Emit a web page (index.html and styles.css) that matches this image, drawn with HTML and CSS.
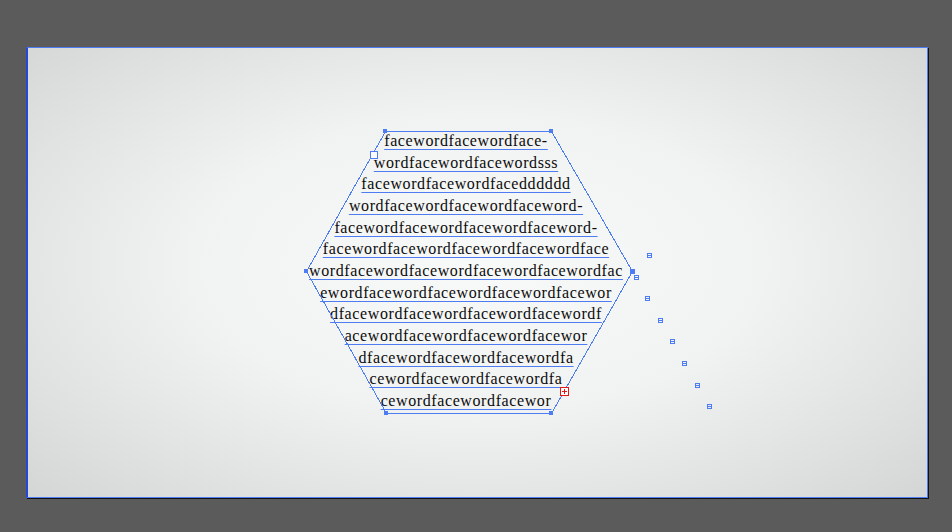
FILE: index.html
```html
<!DOCTYPE html>
<html lang="en">
<head>
    <meta charset="UTF-8">
    <title>Artboard - Text in Shape</title>
    <link rel="stylesheet" href="styles.css">
</head>
<body>
    <div class="artboard"></div>

    <!-- text flowed inside the hexagon -->
    <div class="text-frame">
        <span>facewordfacewordface-</span>
        <span>wordfacewordfacewordsss</span>
        <span>facewordfacewordfacedddddd</span>
        <span>wordfacewordfacewordfaceword-</span>
        <span>facewordfacewordfacewordfaceword-</span>
        <span>facewordfacewordfacewordfacewordface</span>
        <span>wordfacewordfacewordfacewordfacewordfac</span>
        <span>ewordfacewordfacewordfacewordfacewor</span>
        <span>dfacewordfacewordfacewordfacewordf</span>
        <span>acewordfacewordfacewordfacewor</span>
        <span>dfacewordfacewordfacewordfa</span>
        <span>cewordfacewordfacewordfa</span>
        <span>cewordfacewordfacewor</span>
    </div>

    <!-- selection overlay: path, anchors, overflow and thread markers -->
    <svg class="overlay" width="952" height="532" viewBox="0 0 952 532">
        <polygon points="385.5,131.5 551.5,131.5 632.5,271.5 551.5,413.5 386.5,413.5 306.5,271.5" fill="none" stroke="#4d7cf3" stroke-width="1"/>
        <g fill="#4d7cf3">
            <rect x="383" y="129" width="4" height="4"/>
            <rect x="549" y="129" width="4" height="4"/>
            <rect x="630" y="269" width="5" height="5"/>
            <rect x="549" y="411" width="4" height="4"/>
            <rect x="384" y="411" width="4" height="4"/>
            <rect x="304" y="269" width="4" height="4"/>
        </g>
        <rect x="370.5" y="151.5" width="7" height="7" fill="#fff" stroke="#4d7cf3"/>
        <g fill="#fff" stroke="#e01818">
            <rect x="560.5" y="387.5" width="8" height="8"/>
            <path d="M562 391.5h5M564.5 389v5"/>
        </g>
        <g fill="none" stroke="#4d7cf3">
            <path d="M647.5 253.5h4v4h-4zM647.5 255.5h4"/>
            <path d="M634.5 275.5h4v4h-4zM634.5 277.5h4"/>
            <path d="M645.5 296.5h4v4h-4zM645.5 298.5h4"/>
            <path d="M658.5 318.5h4v4h-4zM658.5 320.5h4"/>
            <path d="M670.5 339.5h4v4h-4zM670.5 341.5h4"/>
            <path d="M682.5 361.5h4v4h-4zM682.5 363.5h4"/>
            <path d="M695.5 383.5h4v4h-4zM695.5 385.5h4"/>
            <path d="M707.5 404.5h4v4h-4zM707.5 406.5h4"/>
        </g>
    </svg>
</body>
</html>
```
FILE: styles.css
```css
* {
    margin: 0;
    padding: 0;
    box-sizing: border-box;
}

body {
    width: 952px;
    height: 532px;
    overflow: hidden;
    position: relative;
    background-color: #5b5b5b;
    padding: 47px 0 0 26px;
    font-family: "Liberation Serif", "Times New Roman", serif;
}

/* Artboard */
.artboard {
    width: 902px;
    height: 451px;
    background: radial-gradient(ellipse at 50% 48%, #f8f9f9 0%, #f1f2f2 45%, #d4d6d6 100%);
    border: 1px solid #4d7cf3;
    border-left: 2px solid #2447d8;
    box-shadow: 1px 1px 0 #111;
}

/* Text frame */
.text-frame {
    position: absolute;
    top: 130px;
    left: 266px;
    width: 400px;
    display: flex;
    flex-direction: column;
    align-items: center;
    font-size: 16px;
    line-height: 21.65px;
    color: #0c0c0c;
    letter-spacing: 0.6px;
}

.text-frame span {
    text-decoration: underline;
    text-decoration-color: #4d7cf3;
    text-decoration-thickness: 1px;
    text-underline-offset: 3px;
    white-space: nowrap;
}

/* Selection overlay */
.overlay {
    position: absolute;
    top: 0;
    left: 0;
    shape-rendering: crispEdges;
}
```
